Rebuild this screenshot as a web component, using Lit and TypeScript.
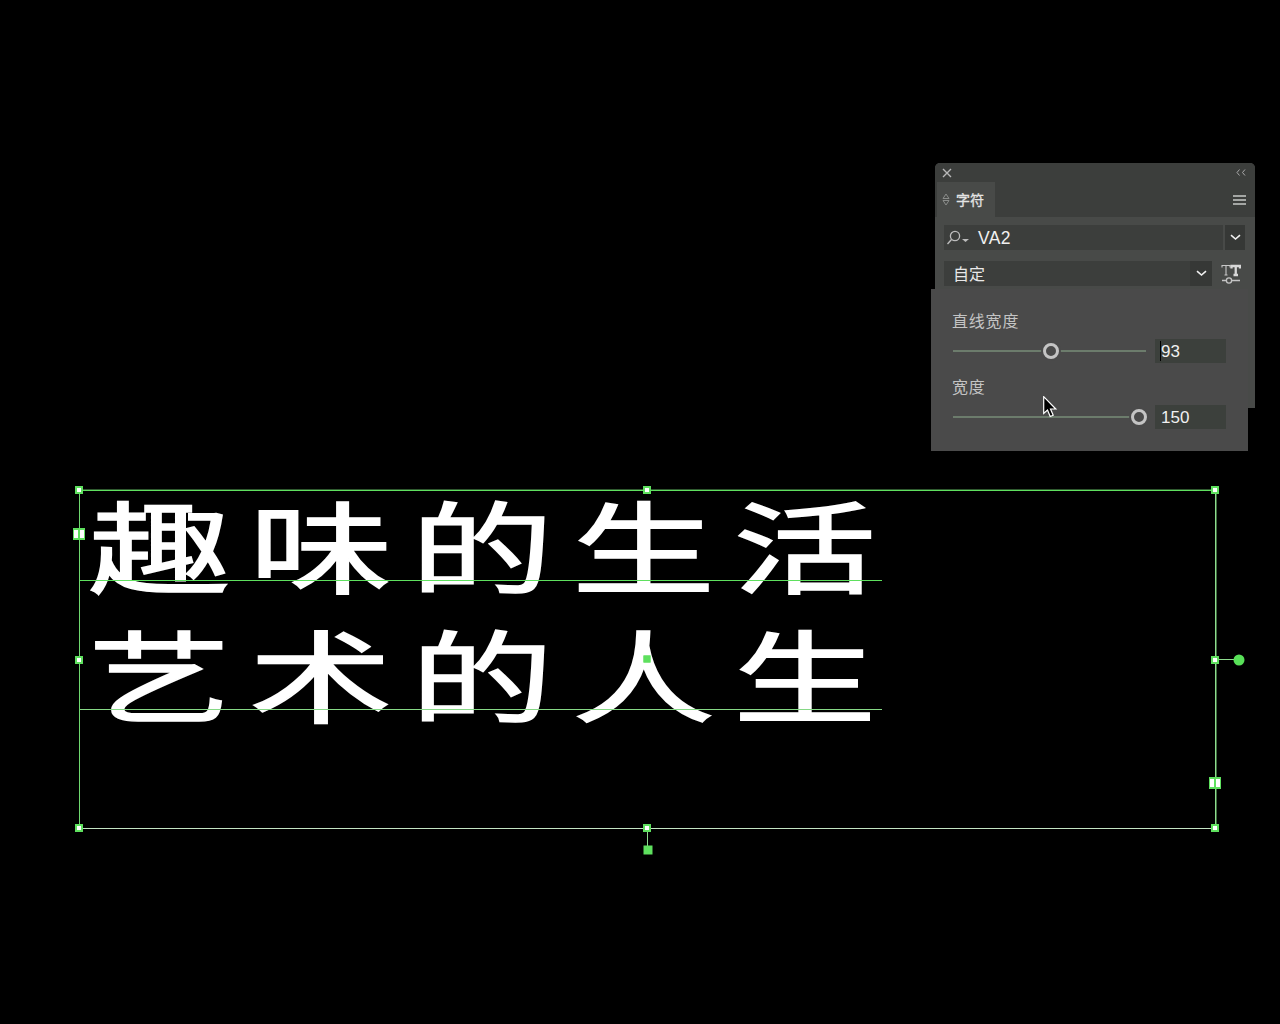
import { LitElement, html, css } from "lit";
import { customElement } from "lit/decorators.js";

@customElement("app-root")
export class AppRoot extends LitElement {
  static styles = css`
    :host { display: block; width: 1280px; height: 1024px; background: #000; position: relative; overflow: hidden;
      font-family: "Liberation Sans", "Noto Sans CJK SC", sans-serif; }
    .frame { position: absolute; left: 79px; top: 490px; width: 1137px; height: 339px; box-sizing: border-box;
      border-top: 1px solid #5fe05f; border-left: 1px solid #6fd86f; border-right: 1px solid #8fdc8f; border-bottom: 1px solid #c4e4c4;
      box-shadow: 0 -1px 0 #2f5a2f, 1px 0 0 #3f6f3f; }
    .lines { position: absolute; left: 0; top: 0; width: 802px; display: flex; flex-direction: column; }
    .line { height: 129px; position: relative; }
    .line.first { height: 90px; }
    .big { position: absolute; left: 8px; bottom: -16px; white-space: nowrap; color: #fff;
      font-family: "Noto Sans CJK SC", sans-serif; font-size: 100px; line-height: 108px; letter-spacing: 12.8px;
      -webkit-text-stroke: 1.5px #fff; transform: scaleX(1.43); transform-origin: left center; }
    .base { position: absolute; left: 0; right: 0; bottom: 0; height: 1px; background: #5ee05e; }
    .base.dim { background: #86d886; }
    .h { position: absolute; width: 8px; height: 8px; box-sizing: border-box; background: #fff; border: 2px solid #5ee05e; transform: translate(-50%, -50%); }
    .h.fill { width: 7px; height: 7px; background: #5ee05e; border-color: #5ee05e; }
    .h.square { width: 9px; height: 9px; background: #5ee05e; border: 0; }
    .h.dbl { width: 12px; height: 12px; border: 0; background: #5ee05e; display: flex; gap: 2px; padding: 2px 1px; }
    .h.dbl i { flex: 1; background: #fff; }
    .stem { position: absolute; background: #8fdc8f; }
    .dot { position: absolute; width: 11px; height: 11px; border-radius: 50%; background: #58e058; transform: translate(-50%, -50%); }

    .panel { position: absolute; left: 935px; top: 163px; width: 320px; height: 245px; background: #484a48; border-radius: 5px 5px 0 0;
      display: flex; flex-direction: column; color: #e8e8e8; box-sizing: border-box; }
    .title { height: 19px; background: #3c3e3c; border-radius: 5px 5px 0 0; display: flex; align-items: center; justify-content: space-between; padding: 0 9px 0 7px; }
    .tabs { height: 35px; background: #3c3e3c; display: flex; align-items: stretch; justify-content: space-between; padding-right: 9px; }
    .tab { width: 58px; margin-left: 2px; background: #484a48; display: flex; align-items: center; gap: 6px; padding-left: 5px; box-sizing: border-box;
      font-size: 14px; letter-spacing: 0; color: #e4e4e4; font-family: "Noto Sans CJK SC", sans-serif; -webkit-text-stroke: .3px #e4e4e4; }
    .tab span { padding-bottom: 2px; }
    .menu { align-self: center; display: flex; flex-direction: column; gap: 2px; width: 13px; }
    .menu i { height: 2px; background: #a4a6a4; }
    .row { display: flex; align-items: center; padding: 0 9px; height: 25px; }
    .row.font { margin-top: 8px; }
    .row.style { margin-top: 11px; }
    .field { background: #3c3e3c; height: 25px; display: flex; align-items: center; box-sizing: border-box; }
    .field.f1 { width: 279px; padding-left: 2px; gap: 8px; font-size: 17.5px; color: #f0f0f0; letter-spacing: .3px; padding-top: 1px; }
    .field.f2 { width: 246px; padding: 0 0 2px 9px; font-size: 16px; font-family: "Noto Sans CJK SC", sans-serif; }
    .caret { background: #363836; width: 22px; height: 25px; display: flex; align-items: center; justify-content: center; }
    .row.font .caret { margin-left: 2px; width: 20px; }
    .tt { margin-left: 9px; flex: none; }

    .pop { position: absolute; left: 931px; top: 289px; width: 317px; height: 162px; background: #4a4a4a; box-sizing: border-box;
      padding: 20px 22px 0 22px; display: flex; flex-direction: column; }
    .label { font-family: "Noto Sans CJK SC", sans-serif; font-size: 16px; line-height: 22px; color: #c4c4c4; letter-spacing: .8px; height: 22px; margin-left: -1px; }
    .srow { display: flex; align-items: center; height: 26px; margin-top: 7px; margin-bottom: 11px; gap: 9px; }
    .track { width: 193px; height: 16px; position: relative; flex: none; display: flex; align-items: center; }
    .track::before { content: ""; flex: 1; height: 2px; background: #6c7c6c; }
    .track.end::before { margin-right: 16px; }
    .thumb { position: absolute; top: 50%; width: 16px; height: 16px; border-radius: 50%; box-sizing: border-box; border: 3px solid #c4c4c4;
      background: #4a4a4a; transform: translate(-50%, -50%); box-shadow: 0 0 0 2px #4a4a4a; }
    .num { width: 71px; height: 24px; background: #3c403c; color: #f0f0f0; font-size: 17px; display: flex; align-items: center; padding: 1px 0 0 6px; box-sizing: border-box; position: relative; }
    .num.edit::before { content: ""; position: absolute; left: 5px; top: 2px; bottom: 2px; width: 1px; background: #000; }
    .cursor { position: absolute; left: 1043px; top: 396px; }
  `;

  render() {
    const h = (x: number, y: number, cls = "") =>
      html`<div class="h ${cls}" style="left:${x}px;top:${y}px"></div>`;
    const chevron = html`<svg width="11" height="7" viewBox="0 0 11 7"><path d="M1 1.200 5.500 5 10 1.200" fill="none" stroke="#f0f0f0" stroke-width="1.600"/></svg>`;
    return html`
      <div class="frame">
        <div class="lines">
          <div class="line first"><span class="big">趣味的生活</span><div class="base"></div></div>
          <div class="line"><span class="big">艺术的人生</span><div class="base dim"></div></div>
        </div>
      </div>
      ${h(79, 490)}${h(647, 490)}${h(1215, 490)}${h(79, 660)}${h(647, 659, "fill")}${h(1215, 660)}${h(79, 828)}${h(647, 828)}${h(1215, 828)}
      <div class="h dbl" style="left:79px;top:534px"><i></i><i></i></div>
      <div class="h dbl" style="left:1215px;top:783px"><i></i><i></i></div>
      <div class="stem" style="left:1219px;top:659px;width:15px;height:1px"></div>
      <div class="dot" style="left:1238.5px;top:659.5px"></div>
      <div class="stem" style="left:647px;top:832px;width:1px;height:14px"></div>
      <div class="h square" style="left:647.5px;top:850px"></div>

      <div class="panel">
        <div class="title">
          <svg width="10" height="10" viewBox="0 0 10 10"><path d="M1 1 9 9M9 1 1 9" stroke="#b8b8b8" stroke-width="1.400"/></svg>
          <svg width="10" height="7" viewBox="0 0 10 7"><path d="M3.500 .5 1 3.500 3.500 6.500M9 .5 6.500 3.500 9 6.500" fill="none" stroke="#a8a8a8"/></svg>
        </div>
        <div class="tabs">
          <div class="tab">
            <svg width="8" height="13" viewBox="0 0 8 13"><path d="M4 1 7 5.500H1ZM4 12 1 7.500H7Z" fill="none" stroke="#8a8c8a"/></svg>
            <span>字符</span>
          </div>
          <div class="menu"><i></i><i></i><i></i></div>
        </div>
        <div class="row font">
          <div class="field f1">
            <svg width="24" height="18" viewBox="0 0 24 18"><circle cx="9" cy="7" r="4.600" fill="none" stroke="#bcbcbc" stroke-width="1.300"/><path d="M5.500 10.500 1.500 15" stroke="#bcbcbc" stroke-width="1.400"/><path d="M16 10h7l-3.500 3z" fill="#bcbcbc"/></svg>
            <span>VA2</span>
          </div>
          <div class="caret">${chevron}</div>
        </div>
        <div class="row style">
          <div class="field f2">自定</div>
          <div class="caret">${chevron}</div>
          <svg class="tt" width="20" height="20" viewBox="0 0 20 20">
            <path d="M1 3.500V1.500H9V3.500M5 1.500V11M3.500 11H6.500" fill="none" stroke="#c8c8c8" stroke-width="1.100"/>
            <path d="M10.500 4.500V2H19V4.500M14.750 2V11M12.500 11H17" fill="none" stroke="#d8d8d8" stroke-width="2.300"/>
            <path d="M1 16.500H5M11 16.500H19" stroke="#c4c4c4" stroke-width="1.300"/><circle cx="8" cy="16.500" r="2.600" fill="none" stroke="#c4c4c4" stroke-width="1.300"/>
          </svg>
        </div>
      </div>

      <div class="pop">
        <div class="label">直线宽度</div>
        <div class="srow">
          <div class="track"><div class="thumb" style="left:98px"></div></div>
          <div class="num edit">93</div>
        </div>
        <div class="label">宽度</div>
        <div class="srow">
          <div class="track end"><div class="thumb" style="left:186px"></div></div>
          <div class="num">150</div>
        </div>
      </div>

      <svg class="cursor" width="16" height="24" viewBox="0 0 16 24">
        <path d="M.7.700V17.500L4.500 14l2.700 6.500 3-1.300L7.500 13h5.300Z" fill="#000" stroke="#fff" stroke-width="1.200"/>
      </svg>
    `;
  }
}
